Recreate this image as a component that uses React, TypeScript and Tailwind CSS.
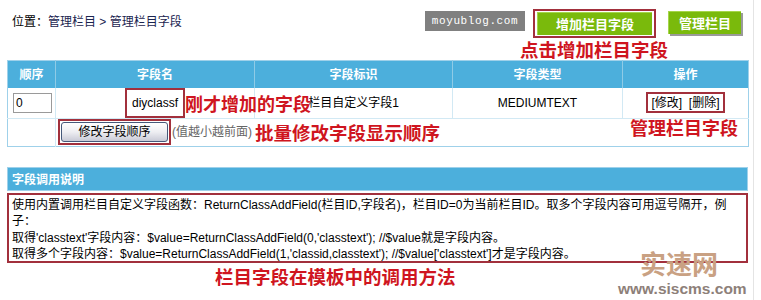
import React from 'react';

const note = "absolute whitespace-nowrap leading-none font-bold text-[#cf1520] font-['Noto_Sans_CJK_SC',sans-serif] [text-shadow:0_0_2px_#fff]";

const headers = [
  { label: '顺序', w: 'w-[48px]' },
  { label: '字段名', w: 'w-[199px]' },
  { label: '字段标识', w: 'w-[198px]' },
  { label: '字段类型', w: 'w-[170px]' },
  { label: '操作', w: 'w-[126px]' },
];

const App: React.FC = () => {
  return (
    <div className="relative w-[761px] h-[300px] overflow-hidden bg-white text-[12px] text-black font-['Liberation_Sans','Noto_Sans_CJK_SC',sans-serif]">
      <div className="w-[754px] h-full border-r border-[#e4e4e4] pl-[7px]">
        {/* top bar */}
        <div className="flex items-start h-[60px] pr-[12px]">
          <div className="pl-[5px] pt-[14px] leading-[16px]">
            位置：<span className="text-[#1b2550]">管理栏目 &gt; 管理栏目字段</span>
          </div>
          <div className="ml-auto flex items-start pt-[9px]">
            <div className="mt-[2px] w-[100px] h-[20px] bg-[#808080] flex items-center justify-center text-white text-[11px] tracking-[0.6px] font-['Liberation_Mono',monospace]">
              moyublog.com
            </div>
            <div className="ml-[8px] border-2 border-[#a2303c] px-[2px] py-[1px]">
              <button className="w-[115px] h-[23px] bg-[#7aba0c] border-t border-l border-[#a5d64a] text-white font-bold text-[13px] font-['Noto_Sans_CJK_SC',sans-serif]">
                增加栏目字段
              </button>
            </div>
            <button className="ml-[12px] mt-[2px] w-[73px] h-[23px] bg-[#7aba0c] border-t border-l border-[#a5d64a] shadow-[2px_2px_0_#9a9a9a] text-white font-bold text-[13px] font-['Noto_Sans_CJK_SC',sans-serif]">
              管理栏目
            </button>
          </div>
        </div>

        {/* field table */}
        <table className="w-[741px] table-fixed border-collapse border border-[#9fd1ea]">
          <thead>
            <tr className="h-[27px] bg-[#4cafdc]">
              {headers.map((h, i) => (
                <th
                  key={h.label}
                  className={`${h.w} p-0 text-white font-bold text-[12px] font-['Noto_Sans_CJK_SC',sans-serif] ${i > 0 ? 'border-l border-[#8fcbe6]' : ''}`}
                >
                  {h.label}
                </th>
              ))}
            </tr>
          </thead>
          <tbody>
            <tr className="h-[30px] border-b border-[#d2e9f4]">
              <td className="p-0 pl-[5px]">
                <div className="w-[39px] h-[20px] border border-[#9a9a9a] pl-[2px] leading-[18px]">0</div>
              </td>
              <td className="p-0 text-center border-l border-[#d2e9f4]">
                <span className="inline-flex items-center h-[30px] px-[5px] border-2 border-[#a2303c]">diyclassf</span>
              </td>
              <td className="p-0 text-center border-l border-[#d2e9f4]">栏目自定义字段1</td>
              <td className="p-0 text-center border-l border-[#d2e9f4]">MEDIUMTEXT</td>
              <td className="p-0 text-center border-l border-[#d2e9f4]">
                <span className="inline-flex items-center h-[21px] px-[3px] border-2 border-[#a2303c]">[修改]&nbsp;&nbsp;[删除]</span>
              </td>
            </tr>
            <tr className="h-[28px]">
              <td className="p-0" />
              <td colSpan={4} className="p-0 border-l border-[#d2e9f4]">
                <div className="flex items-center pl-[2px]">
                  <div className="border-2 border-[#a2303c] p-[1px]">
                    <button className="block w-[107px] h-[20px] rounded-[3px] border border-[#45597a] bg-gradient-to-b from-white via-[#eeeef2] to-[#c9cad6] text-[12px] leading-[18px]">
                      修改字段顺序
                    </button>
                  </div>
                  <span className="text-[#666] ml-[1px]">(值越小越前面)</span>
                </div>
              </td>
            </tr>
          </tbody>
        </table>

        {/* usage notes */}
        <div className="mt-[20px] w-[741px]">
          <div className="h-[24px] bg-[#4cafdc] border border-[#9fd1ea] pl-[4px] flex items-center text-white font-bold font-['Noto_Sans_CJK_SC',sans-serif]">
            字段调用说明
          </div>
          <div className="mt-[2px] h-[70px] border-2 border-[#a2303c] pl-[3px] pt-[2px] leading-[16.5px] whitespace-nowrap">
            <div>使用内置调用栏目自定义字段函数：ReturnClassAddField(栏目ID,字段名)，栏目ID=0为当前栏目ID。取多个字段内容可用逗号隔开，例</div>
            <div>子：</div>
            <div>取得'classtext'字段内容：$value=ReturnClassAddField(0,'classtext'); //$value就是字段内容。</div>
            <div>取得多个字段内容：$value=ReturnClassAddField(1,'classid,classtext'); //$value['classtext']才是字段内容。</div>
          </div>
        </div>
      </div>

      {/* annotations */}
      <div className={`${note} left-[520px] top-[40px] text-[18.5px]`}>点击增加栏目字段</div>
      <div className={`${note} left-[185px] top-[94px] text-[18px]`}>刚才增加的字段</div>
      <div className={`${note} left-[255px] top-[123px] text-[18.5px]`}>批量修改字段显示顺序</div>
      <div className={`${note} left-[630px] top-[118px] text-[18px]`}>管理栏目字段</div>
      <div className={`${note} left-[215px] top-[267px] text-[18.5px]`}>栏目字段在模板中的调用方法</div>

      {/* watermark */}
      <div className="absolute left-[640px] top-[250px] text-[26px] leading-none font-bold text-[#c9a183] font-['Noto_Sans_CJK_SC',sans-serif]">实速网</div>
      <div className="absolute left-[618px] top-[281px] text-[15.5px] leading-none font-bold text-[#8d8079] font-['Liberation_Sans',sans-serif]">www.siscms.com</div>
    </div>
  );
};

export default App;
